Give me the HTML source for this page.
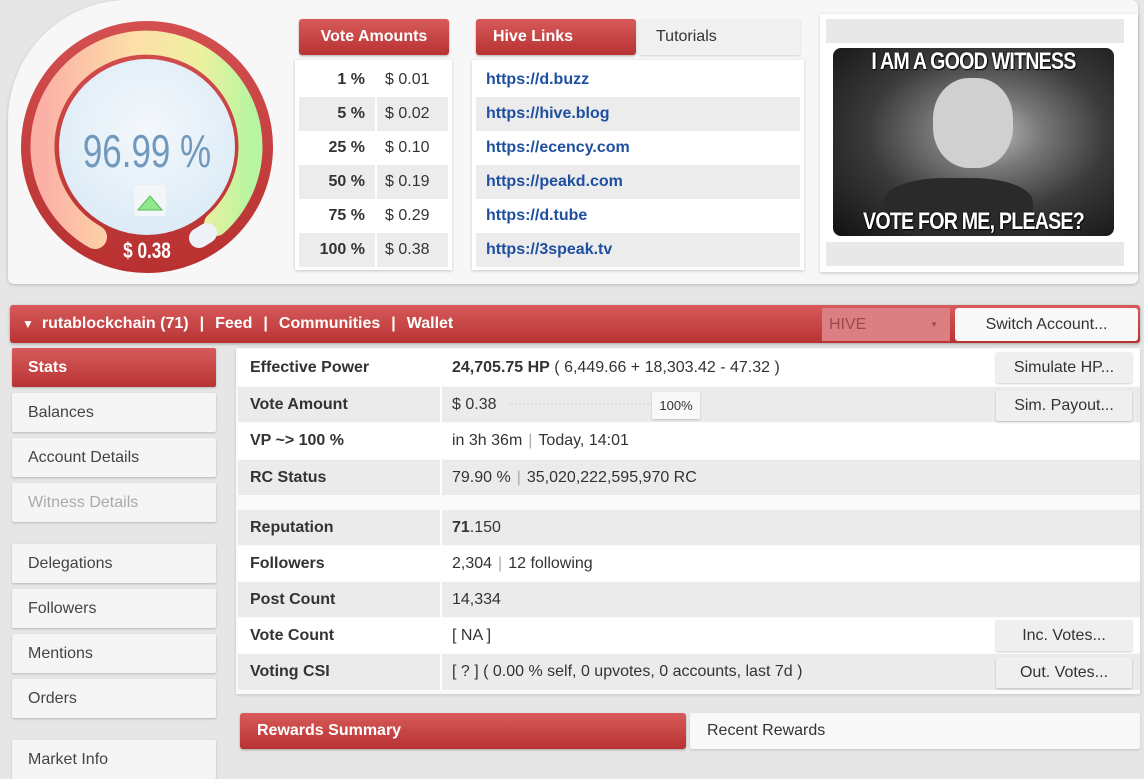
<!DOCTYPE html>
<html><head><meta charset="utf-8"><style>
*{box-sizing:border-box;margin:0;padding:0}
body{width:1144px;height:755px;overflow:hidden;background:#e6e6e6;font-family:"Liberation Sans",sans-serif;font-size:16px;color:#333;position:relative}
.abs{position:absolute}
.top{left:8px;top:0;width:1130px;height:284px;background:#f7f7f7;border-radius:120px 6px 6px 6px;box-shadow:0 1px 3px rgba(0,0,0,.2)}
.redh{background:linear-gradient(#d85a5a,#b83232);color:#fff;font-weight:bold;border-radius:3px;display:flex;align-items:center;box-shadow:0 1px 2px rgba(0,0,0,.3)}
.grayh{background:#f0f0f0;color:#333;display:flex;align-items:center;border-radius:2px;box-shadow:0 1px 2px rgba(0,0,0,.15)}
.tbl{background:#fff;box-shadow:0 1px 3px rgba(0,0,0,.2)}
.row{height:34px;display:flex;align-items:center}
.row.g{background:#ececec}
.va .p{width:78px;text-align:right;font-weight:bold;padding-right:10px;border-right:2px solid #fff;height:100%;display:flex;align-items:center;justify-content:flex-end}
.va .d{padding-left:8px}
.hl a{color:#1f4fa0;font-weight:bold;text-decoration:none;padding-left:10px}
.nav{left:10px;top:305px;width:1130px;height:38px;background:linear-gradient(#d75a5a,#b83434);border-radius:3px;color:#fff;font-weight:bold;display:flex;align-items:center;padding-left:12px;box-shadow:0 1px 3px rgba(0,0,0,.3)}
.sb{left:12px;width:204px;height:39px;background:#f5f5f5;box-shadow:0 1px 2px rgba(0,0,0,.2);display:flex;align-items:center;padding-left:16px;color:#444;border-radius:2px}
.main{left:236px;top:348px;width:904px;height:346px;background:#fafafa;box-shadow:0 1px 3px rgba(0,0,0,.15)}
.tr{position:absolute;left:238px;width:902px;display:flex;align-items:center}
.tr.g{background:#ebebeb}
.tr .l{width:204px;padding-left:12px;font-weight:bold;height:100%;display:flex;align-items:center;border-right:2px solid #fff}
.tr .v{padding-left:10px}
.btn{position:absolute;left:996px;width:136px;height:31px;background:#efefef;box-shadow:0 1px 2px rgba(0,0,0,.2);display:flex;align-items:center;justify-content:center;color:#333;border-radius:2px}
.sep{color:#aaa;padding:0 6px}
</style></head><body>
<div class="abs top"></div>
<svg class="abs" style="left:0;top:0" width="300" height="290">
<defs>
<linearGradient id="ag" x1="0" x2="1" y1="0" y2="0"><stop offset="0" stop-color="#fbb0a6"/><stop offset="0.45" stop-color="#fde0a8"/><stop offset="0.75" stop-color="#eef0a0"/><stop offset="1" stop-color="#b8f5a0"/></linearGradient>
<radialGradient id="ig" cx="0.5" cy="0.4" r="0.6"><stop offset="0" stop-color="#f4f8fc"/><stop offset="1" stop-color="#dcebf6"/></radialGradient>
<linearGradient id="rg" x1="0" x2="0" y1="0" y2="1"><stop offset="0" stop-color="#d45050"/><stop offset="1" stop-color="#b83030"/></linearGradient>
</defs>
<circle cx="147" cy="147" r="126" fill="url(#rg)"/>
<path d="M95 237 A104 104 0 1 1 216 224" fill="none" stroke="url(#ag)" stroke-width="24" stroke-linecap="round"/>
<path d="M207 233 A104 104 0 0 1 199 238" fill="none" stroke="#eef2f6" stroke-width="20" stroke-linecap="round"/>
<circle cx="147" cy="147" r="88" fill="url(#ig)"/>
<rect x="134" y="185" width="32" height="31" rx="3" fill="#f2f6f9"/>
<path d="M138 210 L150 196 L162 210 Z" fill="#8fe88a" stroke="#5cb85c" stroke-width="1"/>
<text x="147" y="167" text-anchor="middle" font-family="Liberation Sans" font-size="46" fill="#7099bd" transform="translate(147 0) scale(0.76 1) translate(-147 0)">96.99 %</text>
<text x="147" y="258" text-anchor="middle" font-family="Liberation Sans" font-weight="bold" font-size="22" fill="#fff" transform="translate(147 0) scale(0.78 1) translate(-147 0)">$ 0.38</text>
</svg>

<div class="abs redh" style="left:299px;top:19px;width:150px;height:36px;justify-content:center">Vote Amounts</div>
<div class="abs tbl va" style="left:295px;top:60px;width:157px;height:210px;padding:3px 4px">
<div class="row"><div class="p">1 %</div><div class="d">$ 0.01</div></div>
<div class="row g"><div class="p">5 %</div><div class="d">$ 0.02</div></div>
<div class="row"><div class="p">25 %</div><div class="d">$ 0.10</div></div>
<div class="row g"><div class="p">50 %</div><div class="d">$ 0.19</div></div>
<div class="row"><div class="p">75 %</div><div class="d">$ 0.29</div></div>
<div class="row g"><div class="p">100 %</div><div class="d">$ 0.38</div></div>
</div>

<div class="abs redh" style="left:476px;top:19px;width:160px;height:36px;padding-left:17px">Hive Links</div>
<div class="abs grayh" style="left:639px;top:19px;width:161px;height:36px;padding-left:17px">Tutorials</div>
<div class="abs tbl hl" style="left:472px;top:60px;width:332px;height:210px;padding:3px 4px">
<div class="row"><a>https://d.buzz</a></div>
<div class="row g"><a>https://hive.blog</a></div>
<div class="row"><a>https://ecency.com</a></div>
<div class="row g"><a>https://peakd.com</a></div>
<div class="row"><a>https://d.tube</a></div>
<div class="row g"><a>https://3speak.tv</a></div>
</div>

<div class="abs tbl" style="left:820px;top:14px;width:318px;height:258px"></div>
<div class="abs" style="left:826px;top:19px;width:298px;height:24px;background:#e8e8e8"></div>
<div class="abs" style="left:826px;top:242px;width:298px;height:24px;background:#e8e8e8"></div>
<div class="abs" style="left:833px;top:48px;width:281px;height:188px;border-radius:8px;background:radial-gradient(ellipse at 55% 45%,#bdbdbd 0,#777 25%,#3a3a3a 55%,#111 100%);overflow:hidden">
<div class="abs" style="left:100px;top:30px;width:80px;height:90px;border-radius:45%;background:#d0d0d0"></div>
<div class="abs" style="left:50px;top:130px;width:150px;height:60px;border-radius:40%;background:#2a2a2a"></div>
<div class="abs" style="left:0;top:0;width:281px;text-align:center;color:#fff;font-weight:bold;font-size:24px;letter-spacing:-1px;text-shadow:0 0 2px #000,1px 1px 1px #000;transform:scaleX(0.82)">I AM A GOOD WITNESS</div>
<div class="abs" style="left:0;top:160px;width:281px;text-align:center;color:#fff;font-weight:bold;font-size:24px;letter-spacing:-1px;text-shadow:0 0 2px #000,1px 1px 1px #000;transform:scaleX(0.82)">VOTE FOR ME, PLEASE?</div>
</div>

<div class="abs nav"><span style="font-size:12px;margin-right:8px">▼</span>rutablockchain (71)<span style="padding:0 11px">|</span>Feed<span style="padding:0 11px">|</span>Communities<span style="padding:0 11px">|</span>Wallet</div>
<div class="abs" style="left:822px;top:308px;width:128px;height:33px;background:#dc7f83;color:#9a4a4e;display:flex;align-items:center;padding-left:7px">HIVE<span style="position:absolute;right:12px;font-size:8px">▼</span></div>
<div class="abs" style="left:955px;top:308px;width:183px;height:33px;background:#f8f8f8;border-radius:3px;display:flex;align-items:center;justify-content:center">Switch Account...</div>

<div class="abs sb" style="top:348px;background:linear-gradient(#d75a5a,#b83434);color:#fff;font-weight:bold">Stats</div>
<div class="abs sb" style="top:393px">Balances</div>
<div class="abs sb" style="top:438px">Account Details</div>
<div class="abs sb" style="top:483px;color:#aaa">Witness Details</div>
<div class="abs sb" style="top:544px">Delegations</div>
<div class="abs sb" style="top:589px">Followers</div>
<div class="abs sb" style="top:634px">Mentions</div>
<div class="abs sb" style="top:679px">Orders</div>
<div class="abs sb" style="top:740px">Market Info</div>

<div class="abs main"></div>
<div class="tr" style="top:350px;height:36px;background:#fff"><div class="l">Effective Power</div><div class="v"><b>24,705.75 HP</b> ( 6,449.66 + 18,303.42 - 47.32 )</div></div>
<div class="tr g" style="top:387px;height:35px"><div class="l">Vote Amount</div><div class="v">$ 0.38</div></div>
<div class="abs" style="left:508px;top:403px;width:145px;height:4px;border-top:2px dotted #e0e0e0"></div>
<div class="abs" style="left:652px;top:392px;width:48px;height:27px;background:#f8f8f8;box-shadow:0 1px 2px rgba(0,0,0,.2);font-size:13px;display:flex;align-items:center;justify-content:center">100%</div>
<div class="tr" style="top:423px;height:36px;background:#fff"><div class="l">VP ~&gt; 100 %</div><div class="v">in 3h 36m<span class="sep">|</span>Today, 14:01</div></div>
<div class="tr g" style="top:460px;height:35px"><div class="l">RC Status</div><div class="v">79.90 %<span class="sep">|</span>35,020,222,595,970 RC</div></div>
<div class="tr g" style="top:510px;height:35px"><div class="l">Reputation</div><div class="v"><b>71</b>.150</div></div>
<div class="tr" style="top:546px;height:35px;background:#fff"><div class="l">Followers</div><div class="v">2,304<span class="sep">|</span>12 following</div></div>
<div class="tr g" style="top:582px;height:35px"><div class="l">Post Count</div><div class="v">14,334</div></div>
<div class="tr" style="top:618px;height:35px;background:#fff"><div class="l">Vote Count</div><div class="v">[ NA ]</div></div>
<div class="tr g" style="top:654px;height:36px"><div class="l">Voting CSI</div><div class="v">[ ? ] ( 0.00 % self, 0 upvotes, 0 accounts, last 7d )</div></div>
<div class="btn" style="top:352px">Simulate HP...</div>
<div class="btn" style="top:390px">Sim. Payout...</div>
<div class="btn" style="top:620px">Inc. Votes...</div>
<div class="btn" style="top:657px">Out. Votes...</div>

<div class="abs redh" style="left:240px;top:713px;width:446px;height:36px;padding-left:17px">Rewards Summary</div>
<div class="abs grayh" style="left:690px;top:713px;width:450px;height:36px;padding-left:17px;background:#f8f8f8">Recent Rewards</div>
</body></html>
